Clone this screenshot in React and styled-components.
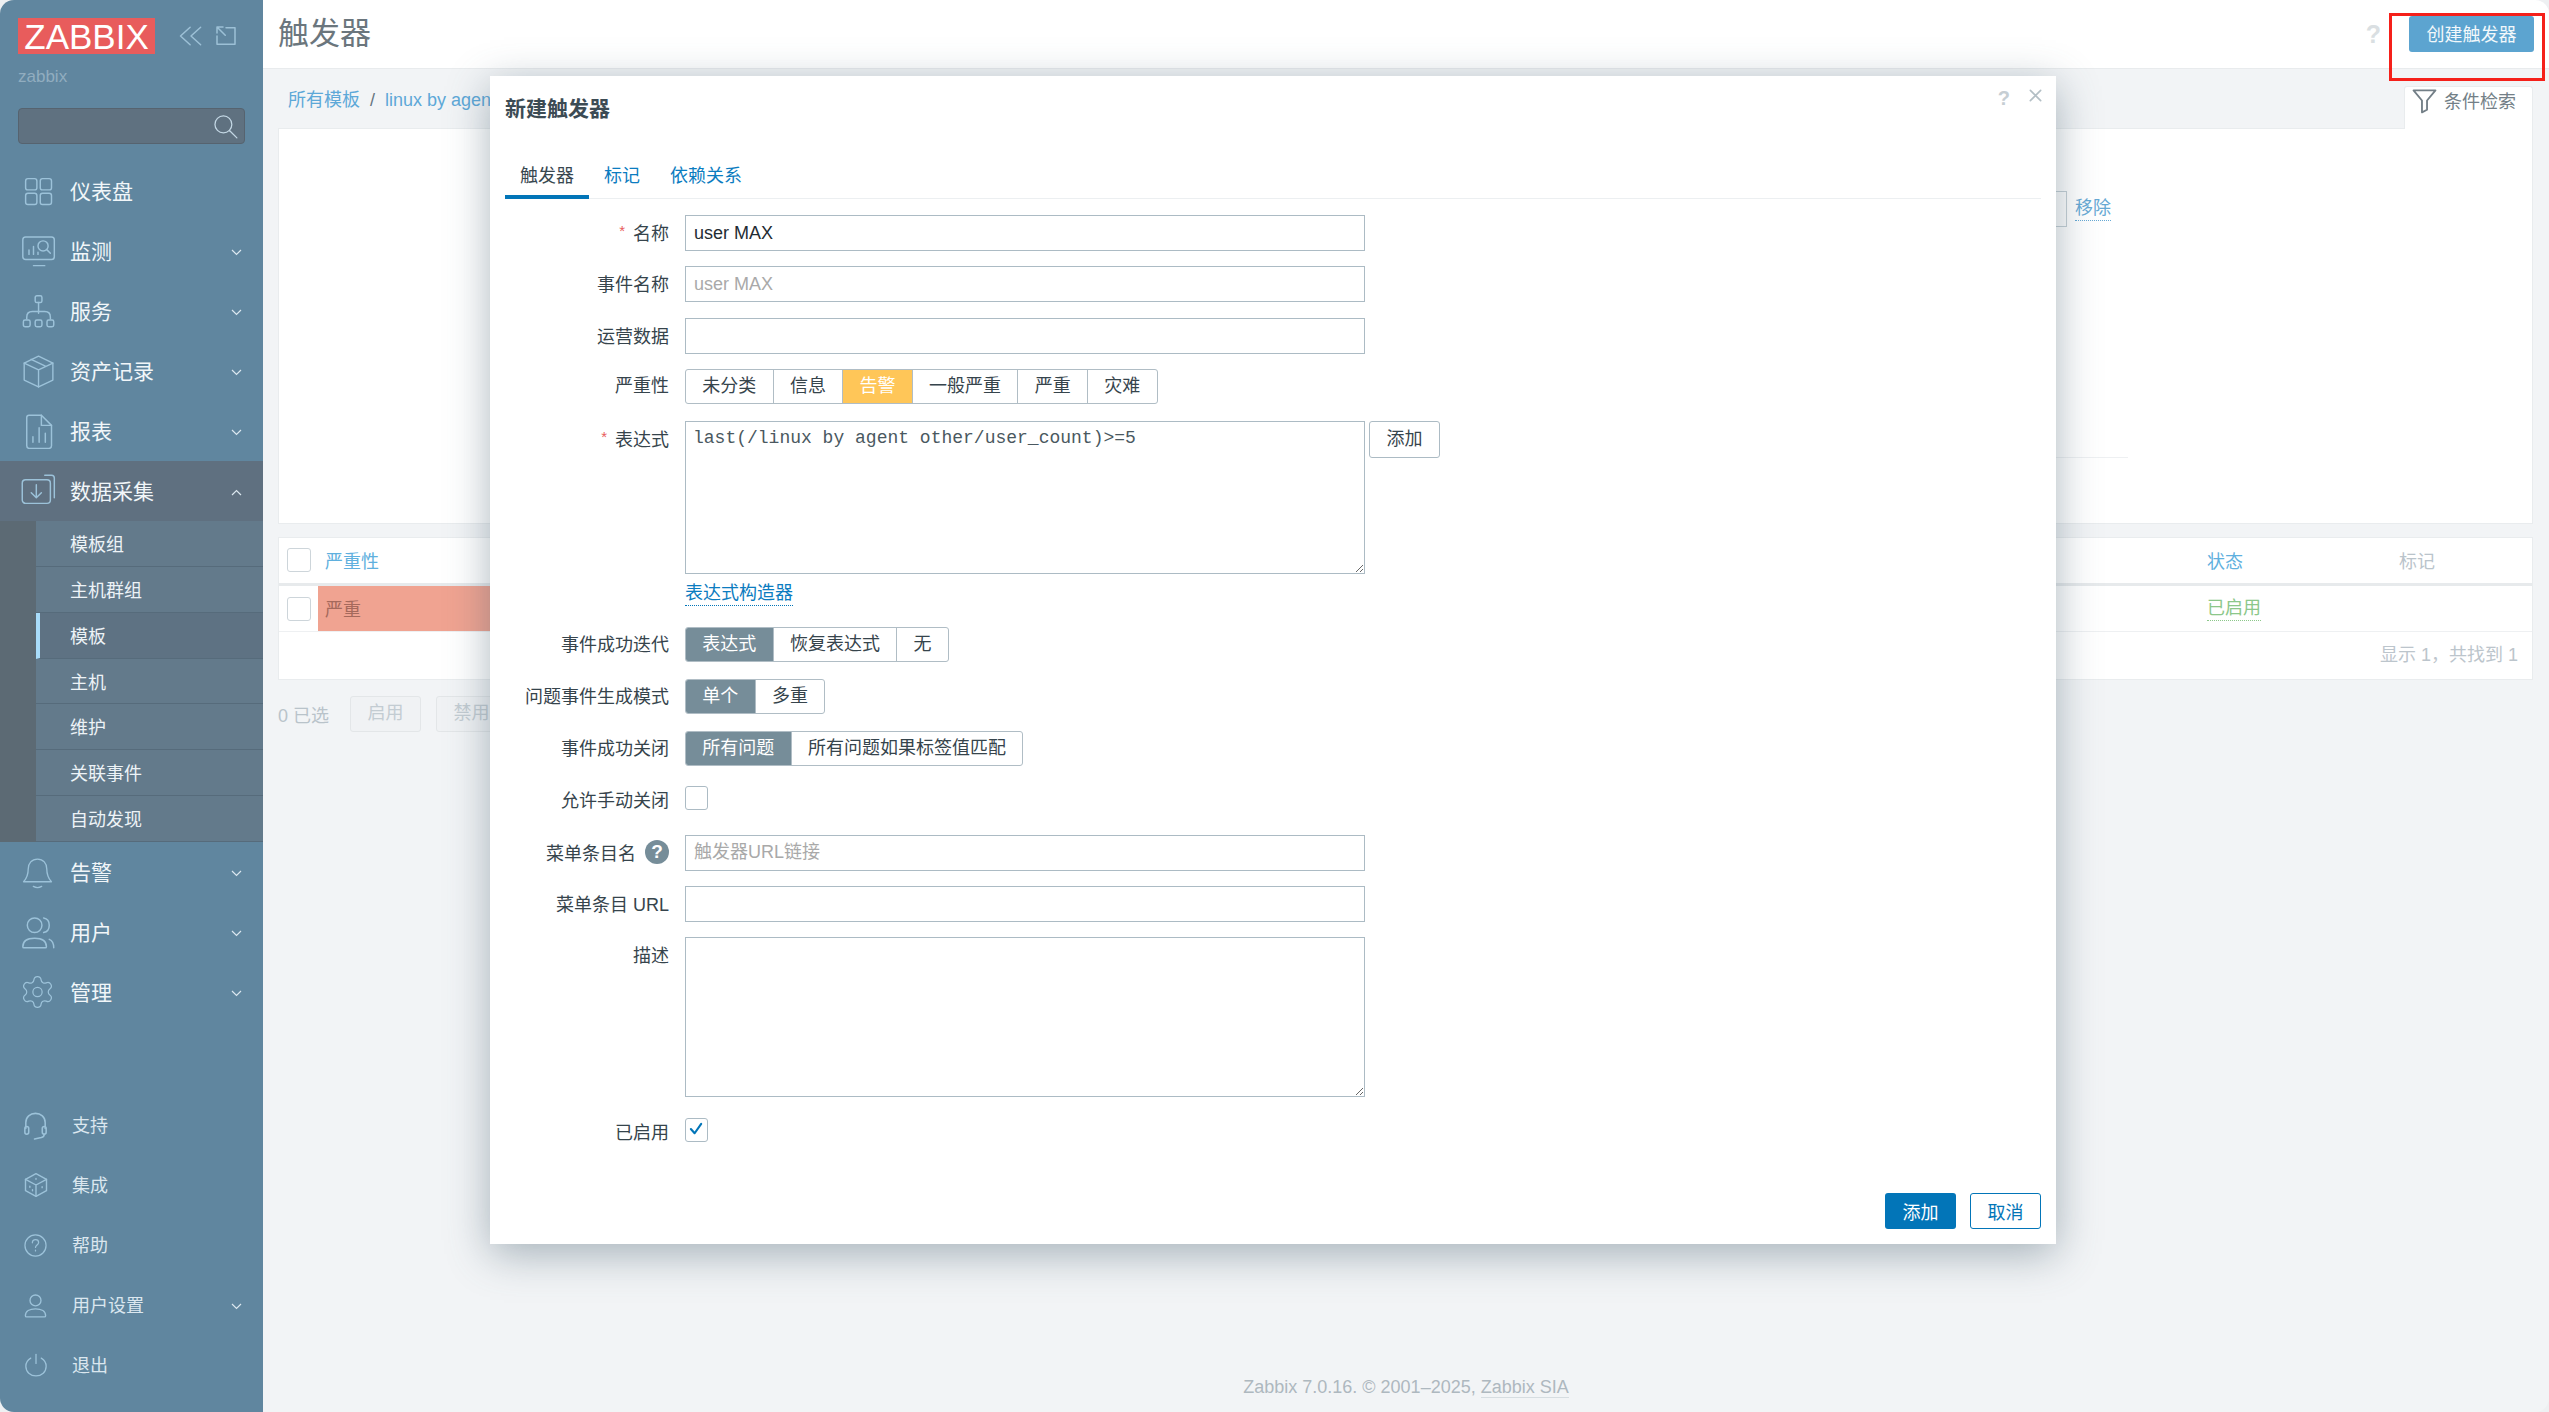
import React from 'react';
import styled, { createGlobalStyle } from 'styled-components';
import { Settings } from 'lucide-react';

const GlobalStyle = createGlobalStyle`
  html, body {
    margin: 0;
    padding: 0;
    height: 100%;
    background: #eef0f2;
  }
  body {
    font-family: "Liberation Sans", "Noto Sans CJK SC", sans-serif;
    font-size: 18px;
    color: #1f2c33;
  }
  * {
    box-sizing: border-box;
  }
`;

const iconPaths = {
  dashboard: (
    <>
      <rect x="5" y="5" width="10" height="10" rx="2" />
      <rect x="18" y="5" width="10" height="10" rx="2" />
      <rect x="5" y="18" width="10" height="10" rx="2" />
      <rect x="18" y="18" width="10" height="10" rx="2" />
    </>
  ),
  monitor: (
    <>
      <path d="M5 23.5c-1.6 0-2.5-.9-2.5-2.5V6c0-1.6.9-2.5 2.5-2.5h23c1.6 0 2.5.9 2.5 2.5v15c0 1.6-.9 2.5-2.5 2.5z" />
      <path d="M12 29h10M8 19v-4M12 19v-7M16 19v-2" />
      <circle cx="20.5" cy="11.5" r="4.5" />
      <path d="M24 15l3 3" />
    </>
  ),
  service: (
    <>
      <rect x="13.5" y="2.5" width="6" height="6" rx="1.5" />
      <path d="M16.5 8.5V18M6 23v-1.5C6 18 8 16.5 11 16.5h11c3 0 5 1.5 5 5V23" />
      <rect x="3" y="24" width="6" height="6" rx="1.5" />
      <rect x="13.5" y="24" width="6" height="6" rx="1.5" />
      <rect x="24" y="24" width="6" height="6" rx="1.5" />
    </>
  ),
  box: (
    <>
      <path d="M16.5 2L30 8.5v16L16.5 31 3 24.5v-16z" />
      <path d="M3 8.5l13.5 6.5L30 8.5M16.5 15v16M9.5 5L23 11.5" />
    </>
  ),
  report: (
    <>
      <path d="M8 2h11l9 9v18c0 1.5-1 2.5-2.5 2.5h-17C7 31.5 6 30.5 6 29V4c0-1.2.8-2 2-2z" />
      <path d="M19 2v9h9M11.5 26v-5M17 26V13M22.5 26v-8" />
    </>
  ),
  collect: (
    <>
      <rect x="2" y="6" width="25" height="21" rx="3" />
      <path d="M14.5 10.5v11M10 17.5l4.5 4.5 4.5-4.5M22 2h6c1.5 0 2.5 1 2.5 2.5V22" />
    </>
  ),
  bell: (
    <>
      <path d="M16 3c-5.5 0-9 4-9 9.5 0 6-1.5 9-4.5 12.5h27C26.5 21.5 25 18.5 25 12.5 25 7 21.5 3 16 3z" />
      <path d="M12 29.5c2.5 1.5 5.5 1.5 8 0" />
    </>
  ),
  users: (
    <>
      <circle cx="13" cy="10" r="6.5" />
      <path d="M2.5 29c0-5 4-7.5 10.5-7.5S23.5 24 23.5 29c0 .6-.4 1-1 1h-19c-.6 0-1-.4-1-1z" />
      <path d="M21 3.5c3 .5 5 3 5 6.5s-2 6-5 6.5M26 22.5c2.5 1 4 3.5 4 7.5" />
    </>
  ),
  headset: (
    <>
      <path d="M6 19v-6C6 7 10.5 3.5 16 3.5S26 7 26 13v6" />
      <rect x="5" y="17" width="4" height="8" rx="2" />
      <rect x="23" y="17" width="4" height="8" rx="2" />
      <path d="M25 25c0 2-1 3-3 3.5L15 30" />
    </>
  ),
  dice: (
    <>
      <path d="M16 3l12 6.5v13L16 29 4 22.5v-13z" />
      <path d="M4 9.5l12 6.5 12-6.5M16 16v13" />
      <path d="M16 8.5v1M9 17.5v1M12 21.5v1M23 18v1" />
    </>
  ),
  help: (
    <>
      <circle cx="16" cy="16" r="13.5" />
      <path d="M12 12.5c0-2.5 1.8-4 4-4s4 1.5 4 3.5c0 3-4 3.5-4 6.5M16 22v1" />
    </>
  ),
  user: (
    <>
      <circle cx="16" cy="10" r="6.5" />
      <path d="M4 28c0-5 5-8 12-8s12 3 12 8c0 1-.6 1.5-1.5 1.5h-21C4.6 29.5 4 29 4 28z" />
    </>
  ),
  power: (
    <>
      <path d="M16 3v11" />
      <path d="M9.5 7.5C5.8 9.8 3.5 13.5 3.5 17.5c0 7 5.5 12 12.5 12s12.5-5 12.5-12c0-4-2.3-7.7-6-10" />
    </>
  ),
  search: (
    <>
      <circle cx="13.5" cy="13.5" r="10" />
      <path d="M21 21l8.5 8.5" />
    </>
  ),
  collapse: <path d="M15 6L4 16l11 10M27 6L16 16l11 10" />,
  expand: <path d="M4 16v11h24V5H16M4 4h8M4 4v8M4 4l11 11" />,
  filter: <path d="M3 4h26L19 16v11l-6 3V16z" />,
  close: <path d="M5 5l22 22M27 5L5 27" />,
  check: <path d="M4 15l8 9L26 4" />,
};

function Icon({ name, size = 32, width = 1.3 }) {
  return (
    <svg
      width={size}
      height={size}
      viewBox="0 0 32 32"
      fill="none"
      stroke="currentColor"
      strokeWidth={width}
      strokeLinecap="round"
      strokeLinejoin="round"
    >
      {iconPaths[name]}
    </svg>
  );
}

const mainMenu = [
  { label: '仪表盘', icon: 'dashboard', size: 36 },
  { label: '监测', icon: 'monitor', size: 36, arrow: true },
  { label: '服务', icon: 'service', size: 36, arrow: true },
  { label: '资产记录', icon: 'box', size: 34, arrow: true },
  { label: '报表', icon: 'report', size: 36, arrow: true },
];

const subMenu = ['模板组', '主机群组', '模板', '主机', '维护', '关联事件', '自动发现'];

const lowerMenu = [
  { label: '告警', icon: 'bell', size: 33, arrow: true },
  { label: '用户', icon: 'users', size: 36, arrow: true },
  { label: '管理', icon: 'gear', arrow: true },
];

const bottomMenu = [
  { label: '支持', icon: 'headset', size: 31 },
  { label: '集成', icon: 'dice', size: 28 },
  { label: '帮助', icon: 'help', size: 25 },
  { label: '用户设置', icon: 'user', size: 27, arrow: true },
  { label: '退出', icon: 'power', size: 26 },
];

function Chevron({ up }) {
  return (
    <ChevronBox>
      <svg width="11" height="7" viewBox="0 0 11 7" fill="none" stroke="currentColor" strokeWidth="1.2">
        <path d={up ? 'M1 6l4.5-4.5L10 6' : 'M1 1l4.5 4.5L10 1'} />
      </svg>
    </ChevronBox>
  );
}

function MenuItem({ item, active, up, small }) {
  return (
    <MenuRow $active={active}>
      <MenuIcon $small={small}>
        {item.icon === 'gear' ? (
          <Settings size={38} strokeWidth={0.8} />
        ) : (
          <Icon name={item.icon} size={item.size || 36} width={small ? 1.6 : 1.3} />
        )}
      </MenuIcon>
      <MenuLabel $small={small}>{item.label}</MenuLabel>
      {item.arrow && <Chevron up={up} />}
    </MenuRow>
  );
}

function Segments({ items, active, warn }) {
  return (
    <SegmentGroup>
      {items.map((label, i) => (
        <Segment key={label} $active={i === active} $warn={warn}>
          {label}
        </Segment>
      ))}
    </SegmentGroup>
  );
}

function Field({ label, required, hint, children, center, top = 0, bottom = 0 }) {
  return (
    <FormRow $center={center} $top={top} $bottom={bottom}>
      <FieldLabel $required={required} $center={center}>
        {label}
        {hint && <HintMark>?</HintMark>}
      </FieldLabel>
      <FieldBody>{children}</FieldBody>
    </FormRow>
  );
}

export default function App() {
  return (
    <>
      <GlobalStyle />
      <Page>
        <Sidebar>
          <LogoRow>
            <Logo>ZABBIX</Logo>
            <LogoTools>
              <Icon name="collapse" size={28} width={1.7} />
              <Icon name="expand" size={24} width={2} />
            </LogoTools>
          </LogoRow>
          <ServerName>zabbix</ServerName>
          <SearchBox>
            <Icon name="search" size={27} width={1.5} />
          </SearchBox>
          <Nav>
            {mainMenu.map(item => (
              <MenuItem key={item.label} item={item} />
            ))}
            <MenuItem item={{ label: '数据采集', icon: 'collect', size: 36, arrow: true }} active up />
            <SubNav>
              {subMenu.map(label => (
                <SubItem key={label} $active={label === '模板'}>
                  {label}
                </SubItem>
              ))}
            </SubNav>
            {lowerMenu.map(item => (
              <MenuItem key={item.label} item={item} />
            ))}
          </Nav>
          <BottomNav>
            {bottomMenu.map(item => (
              <MenuItem key={item.label} item={item} small />
            ))}
          </BottomNav>
        </Sidebar>

        <Main>
          <Header>
            <Title>触发器</Title>
            <HeaderActions>
              <PageHelp>?</PageHelp>
              <CreateButton>创建触发器</CreateButton>
            </HeaderActions>
          </Header>
          <Crumbs>
            <CrumbList>
              <span>所有模板</span>
              <CrumbSep>/</CrumbSep>
              <span>linux by agent other</span>
            </CrumbList>
            <FilterTab>
              <Icon name="filter" size={27} width={2.2} />
              条件检索
            </FilterTab>
          </Crumbs>
          <FilterPanel>
            <FilterRow>
              <FilterStub />
              <RemoveLink>移除</RemoveLink>
            </FilterRow>
            <FilterRule />
          </FilterPanel>
          <TablePanel>
            <TableHead>
              <CheckCell>
                <FadedCheck />
              </CheckCell>
              <HeadLink>严重性</HeadLink>
              <span />
              <HeadLink>状态</HeadLink>
              <HeadMuted>标记</HeadMuted>
            </TableHead>
            <TableRow>
              <CheckCell>
                <FadedCheck />
              </CheckCell>
              <SeverityCell>严重</SeverityCell>
              <span />
              <StatusCell>
                <StatusLink>已启用</StatusLink>
              </StatusCell>
              <span />
            </TableRow>
            <Pager>显示 1，共找到 1</Pager>
          </TablePanel>
          <ActionRow>
            <SelectedCount>0 已选</SelectedCount>
            <DisabledButton>启用</DisabledButton>
            <DisabledButton>禁用</DisabledButton>
          </ActionRow>
          <Footer>
            Zabbix 7.0.16. © 2001–2025, <FooterLink>Zabbix SIA</FooterLink>
          </Footer>
        </Main>

        <Marker />

        <Modal>
          <ModalHeader>
            <ModalTitle>新建触发器</ModalTitle>
            <ModalTools>
              <ModalHelp>?</ModalHelp>
              <Icon name="close" size={15} width={3.5} />
            </ModalTools>
          </ModalHeader>
          <Tabs>
            <Tab $active>触发器</Tab>
            <Tab>标记</Tab>
            <Tab>依赖关系</Tab>
          </Tabs>
          <Form>
            <Field label="名称" required>
              <TextInput defaultValue="user MAX" />
            </Field>
            <Field label="事件名称">
              <TextInput placeholder="user MAX" />
            </Field>
            <Field label="运营数据">
              <TextInput />
            </Field>
            <Field label="严重性" center>
              <Segments items={['未分类', '信息', '告警', '一般严重', '严重', '灾难']} active={2} warn />
            </Field>
            <Field label="表达式" required>
              <ExpressionRow>
                <div>
                  <TextArea
                    $mono
                    $height={153}
                    defaultValue="last(/linux by agent other/user_count)>=5"
                  />
                  <BuilderLink>表达式构造器</BuilderLink>
                </div>
                <AddSmall>添加</AddSmall>
              </ExpressionRow>
            </Field>
            <Field label="事件成功迭代" center>
              <Segments items={['表达式', '恢复表达式', '无']} active={0} />
            </Field>
            <Field label="问题事件生成模式" center>
              <Segments items={['单个', '多重']} active={0} />
            </Field>
            <Field label="事件成功关闭" center>
              <Segments items={['所有问题', '所有问题如果标签值匹配']} active={0} />
            </Field>
            <Field label="允许手动关闭" center top={3} bottom={1}>
              <CheckBox />
            </Field>
            <Field label="菜单条目名" hint>
              <TextInput placeholder="触发器URL链接" />
            </Field>
            <Field label="菜单条目 URL">
              <TextInput />
            </Field>
            <Field label="描述">
              <TextArea $height={160} />
            </Field>
            <Field label="已启用" center top={5}>
              <CheckBox>
                <Icon name="check" size={15} width={4.5} />
              </CheckBox>
            </Field>
          </Form>
          <ModalFooter>
            <PrimaryButton>添加</PrimaryButton>
            <OutlineButton>取消</OutlineButton>
          </ModalFooter>
        </Modal>
      </Page>
    </>
  );
}

const Page = styled.div`
  position: relative;
  display: flex;
  width: 2549px;
  height: 1412px;
  overflow: hidden;
  border-radius: 14px;
  background: #f2f4f6;
`;

const Sidebar = styled.aside`
  display: flex;
  flex-direction: column;
  flex: 0 0 263px;
  background: #60869f;
  color: #f1f6f9;
`;

const LogoRow = styled.div`
  display: flex;
  align-items: center;
  padding: 18px 0 0 18px;
`;

const Logo = styled.div`
  width: 137px;
  height: 36px;
  background: #e85c5c;
  color: #ffffff;
  font-size: 35px;
  line-height: 37px;
  text-align: center;
`;

const LogoTools = styled.div`
  display: flex;
  align-items: center;
  gap: 9px;
  margin-left: 22px;
  color: #9cc0d6;
`;

const ServerName = styled.div`
  padding: 12px 0 0 18px;
  height: 54px;
  color: #91adbf;
  font-size: 17px;
  line-height: 22px;
`;

const SearchBox = styled.div`
  display: flex;
  align-items: center;
  justify-content: flex-end;
  width: 227px;
  height: 36px;
  margin-left: 18px;
  padding-right: 5px;
  background: #5f7180;
  border: 1px solid #56636f;
  border-radius: 4px;
  color: #c3d7e4;
`;

const Nav = styled.nav`
  margin-top: 17px;
`;

const BottomNav = styled.nav`
  margin-top: auto;
  padding-bottom: 17px;
`;

const MenuRow = styled.div`
  display: flex;
  align-items: center;
  height: 60px;
  background: ${props => (props.$active ? '#5f7080' : 'transparent')};
`;

const MenuIcon = styled.span`
  display: flex;
  align-items: center;
  justify-content: center;
  width: 37px;
  margin-left: ${props => (props.$small ? '17px' : '19px')};
  margin-right: ${props => (props.$small ? '18px' : '14px')};
  color: #9cc2d9;
`;

const MenuLabel = styled.span`
  flex: 1;
  padding-bottom: 2px;
  font-size: ${props => (props.$small ? '18px' : '21px')};
  color: ${props => (props.$small ? '#dbe7ef' : '#f1f6f9')};
`;

const ChevronBox = styled.span`
  display: flex;
  width: 11px;
  margin: 2px 21px 0 0;
  color: #dbe7ef;
`;

const SubNav = styled.div`
  margin: 0;
  padding-left: 36px;
  background: #5c6a74;
`;

const SubItem = styled.div`
  height: 45.86px;
  padding-left: ${props => (props.$active ? '30px' : '34px')};
  line-height: 48px;
  font-size: 18px;
  color: #edf3f7;
  background: ${props => (props.$active ? '#5e7283' : '#637a8b')};
  border-left: ${props => (props.$active ? '4px solid #a8dcfa' : 'none')};
  border-bottom: 1px solid #566b7b;
`;

const Main = styled.main`
  display: flex;
  flex-direction: column;
  flex: 1;
  min-width: 0;
`;

const Header = styled.header`
  display: flex;
  justify-content: space-between;
  height: 69px;
  padding: 16px 15px 0 15px;
  background: #ffffff;
  border-bottom: 1px solid #e8ebed;
`;

const Title = styled.h1`
  margin: 0;
  font-size: 31px;
  line-height: 36px;
  font-weight: 400;
  color: #6b767d;
`;

const HeaderActions = styled.div`
  display: flex;
  align-items: flex-start;
  gap: 28px;
`;

const PageHelp = styled.span`
  font-size: 25px;
  line-height: 36px;
  font-weight: 700;
  color: #dadfe2;
`;

const CreateButton = styled.button`
  width: 125px;
  height: 36px;
  padding: 0 0 3px;
  background: #5ca4d0;
  border: 0;
  border-radius: 3px;
  color: #f2f8fb;
  font: inherit;
`;

const Crumbs = styled.div`
  display: flex;
  justify-content: space-between;
  align-items: flex-end;
  height: 59px;
  padding: 0 16px 0 15px;
`;

const CrumbList = styled.div`
  display: flex;
  align-self: center;
  align-items: baseline;
  gap: 10px;
  width: 212px;
  overflow: hidden;
  padding: 3px 0 0 10px;
  line-height: 26px;
  white-space: nowrap;
  color: #5da8d8;
`;

const CrumbSep = styled.span`
  color: #66757f;
`;

const FilterTab = styled.div`
  position: relative;
  z-index: 1;
  display: flex;
  align-items: center;
  gap: 6px;
  width: 129px;
  height: 43px;
  margin-bottom: -1px;
  padding: 0 0 16px 6px;
  background: #ffffff;
  border: 1px solid #e9ecee;
  border-bottom: 0;
  border-radius: 3px 3px 0 0;
  color: #737f87;
`;

const FilterPanel = styled.section`
  height: 396px;
  margin: 0 16px 0 15px;
  padding: 62px 0 0 1620px;
  background: #ffffff;
  border: 1px solid #e9ecee;
`;

const FilterRow = styled.div`
  display: flex;
  align-items: flex-start;
`;

const FilterStub = styled.div`
  width: 168px;
  height: 36px;
  border: 1px solid #c5d0d6;
`;

const RemoveLink = styled.span`
  margin: 5px 0 0 8px;
  color: #67a9d4;
  border-bottom: 1px dotted #67a9d4;
  line-height: 24px;
`;

const FilterRule = styled.div`
  width: 229px;
  height: 1px;
  margin-top: 230px;
  background: #eef0f2;
`;

const TablePanel = styled.section`
  margin: 13px 16px 0 15px;
  background: #ffffff;
  border: 1px solid #e9ecee;
`;

const TableHead = styled.div`
  display: grid;
  grid-template-columns: 39px 300px 1fr 199px 133px;
  align-items: center;
  height: 48px;
  padding-bottom: 2px;
  border-bottom: 3px solid #e7eaec;
`;

const TableRow = styled(TableHead)`
  height: 46px;
  padding-bottom: 0;
  border-bottom: 1px solid #eef0f2;
  align-items: stretch;
`;

const CheckCell = styled.div`
  display: flex;
  align-items: center;
  padding-left: 8px;
`;

const FadedCheck = styled.span`
  display: block;
  width: 24px;
  height: 24px;
  background: #ffffff;
  border: 1px solid #cdd5da;
  border-radius: 3px;
`;

const HeadLink = styled.span`
  padding-left: 7px;
  color: #5fb0de;
`;

const HeadMuted = styled.span`
  color: #bac4cb;
`;

const SeverityCell = styled.div`
  display: flex;
  align-items: center;
  padding: 0 0 2px 7px;
  background: #f0a391;
  color: #a5695c;
`;

const StatusCell = styled.div`
  display: flex;
  align-items: center;
  padding-left: 7px;
`;

const StatusLink = styled.span`
  color: #8cc78a;
  border-bottom: 1px dotted #8cc78a;
  line-height: 24px;
`;

const Pager = styled.div`
  height: 47px;
  padding-right: 14px;
  line-height: 46px;
  text-align: right;
  color: #bcc5cc;
`;

const ActionRow = styled.div`
  display: flex;
  align-items: center;
  gap: 15px;
  padding: 16px 0 0 15px;
`;

const SelectedCount = styled.span`
  width: 57px;
  color: #b9c3ca;
`;

const DisabledButton = styled.span`
  width: 71px;
  height: 36px;
  line-height: 33px;
  text-align: center;
  background: #f0f2f4;
  border: 1px solid #e3e6e8;
  border-radius: 3px;
  color: #c3ccd2;
`;

const Footer = styled.footer`
  margin-top: auto;
  padding: 0 0 13px;
  text-align: center;
  line-height: 24px;
  color: #aeb8bf;
`;

const FooterLink = styled.span`
  border-bottom: 1px solid #d6dde1;
`;

const Marker = styled.div`
  position: absolute;
  left: 2389px;
  top: 13px;
  width: 156px;
  height: 68px;
  border: 3px solid #f5201a;
  pointer-events: none;
`;

const Modal = styled.div`
  position: absolute;
  left: 490px;
  top: 76px;
  display: flex;
  flex-direction: column;
  width: 1566px;
  height: 1168px;
  padding: 0 15px;
  background: #ffffff;
  box-shadow: 0 10px 40px rgba(70, 95, 110, 0.45);
`;

const ModalHeader = styled.div`
  display: flex;
  justify-content: space-between;
  height: 64px;
  padding-top: 17px;
`;

const ModalTitle = styled.h2`
  margin: 0;
  font-size: 21px;
  line-height: 31px;
  font-weight: 700;
  color: #3c4b54;
`;

const ModalTools = styled.div`
  display: flex;
  align-items: flex-start;
  gap: 18px;
  margin: -5px -2px 0 0;
  color: #b3bfc5;
`;

const ModalHelp = styled.span`
  font-size: 20px;
  line-height: 20px;
  font-weight: 700;
  color: #c6ced3;
`;

const Tabs = styled.div`
  display: flex;
  height: 59px;
  padding-top: 21px;
  border-bottom: 1px solid #eceff1;
`;

const Tab = styled.div`
  height: 38px;
  padding: 0 15px;
  line-height: 30px;
  color: ${props => (props.$active ? '#38474f' : '#0b7cc0')};
  border-bottom: ${props => (props.$active ? '4px solid #0275b8' : '0')};
`;

const Form = styled.div`
  display: flex;
  flex-direction: column;
  gap: 15.33px;
  padding-top: 16px;
`;

const FormRow = styled.div`
  display: grid;
  grid-template-columns: 164px 1fr;
  column-gap: 16px;
  min-height: ${props => (props.$center && !props.$top ? '36.7px' : '0')};
  padding: ${props => props.$top}px 0 ${props => props.$bottom}px;
`;

const FieldLabel = styled.div`
  display: flex;
  align-items: center;
  justify-content: flex-end;
  height: ${props => (props.$center ? 'auto' : '36px')};
  padding-bottom: ${props => (props.$center ? '6px' : '2px')};
  color: #36444c;

  &::before {
    content: ${props => (props.$required ? '"*"' : 'none')};
    margin: -3px 8px 0 0;
    color: #e85c5c;
    font-size: 15px;
  }
`;

const HintMark = styled.span`
  width: 24px;
  height: 24px;
  margin-left: 9px;
  border-radius: 50%;
  background: #768d99;
  color: #ffffff;
  font-size: 19px;
  font-weight: 700;
  line-height: 24px;
  text-align: center;
`;

const FieldBody = styled.div`
  display: flex;
  align-items: flex-start;
`;

const TextInput = styled.input`
  width: 680px;
  height: 36px;
  padding: 0 8px;
  background: #ffffff;
  border: 1px solid #acbbc4;
  border-radius: 0;
  color: #1f2c33;
  font: inherit;
  outline: 0;

  &::placeholder {
    color: #a9a9a9;
    opacity: 1;
  }
`;

const TextArea = styled.textarea`
  display: block;
  width: 680px;
  height: ${props => props.$height}px;
  padding: 6px 7px;
  background: #ffffff;
  border: 1px solid #acbbc4;
  border-radius: 0;
  color: #4a5860;
  font: inherit;
  font-family: ${props => (props.$mono ? '"Liberation Mono", monospace' : 'inherit')};
  outline: 0;
  resize: both;
`;

const SegmentGroup = styled.div`
  display: flex;
  height: 35px;
  background: #ffffff;
  border: 1px solid #b0bdc5;
  border-radius: 3px;
  overflow: hidden;
`;

const Segment = styled.span`
  padding: 0 16.3px;
  line-height: 33px;
  color: ${props => (props.$active ? '#ffffff' : '#36444c')};
  background: ${props => (props.$active ? (props.$warn ? '#ffc658' : '#768d99') : 'transparent')};
  border-right: 1px solid #b0bdc5;
  white-space: nowrap;

  &:last-child {
    border-right: 0;
  }
`;

const ExpressionRow = styled.div`
  display: flex;
  align-items: flex-start;
  gap: 4px;
`;

const AddSmall = styled.span`
  width: 71px;
  height: 37px;
  line-height: 34px;
  text-align: center;
  background: #ffffff;
  border: 1px solid #acbbc4;
  border-radius: 3px;
  color: #36444c;
`;

const BuilderLink = styled.span`
  display: inline-block;
  margin: 7px 0 6px;
  line-height: 24px;
  color: #0b7cc0;
  border-bottom: 1px dotted #0275b8;
`;

const CheckBox = styled.span`
  display: flex;
  align-items: center;
  justify-content: center;
  width: 23px;
  height: 24px;
  background: #ffffff;
  border: 1px solid #acbbc4;
  border-radius: 3px;
  color: #0275b8;
`;

const ModalFooter = styled.div`
  display: flex;
  justify-content: flex-end;
  gap: 14px;
  margin-top: auto;
  padding-bottom: 15px;
`;

const PrimaryButton = styled.button`
  width: 71px;
  height: 36px;
  padding: 0;
  background: #0275b8;
  border: 0;
  border-radius: 3px;
  color: #ffffff;
  font: inherit;
`;

const OutlineButton = styled.button`
  width: 71px;
  height: 36px;
  padding: 0;
  background: #ffffff;
  border: 1px solid #0275b8;
  border-radius: 3px;
  color: #0275b8;
  font: inherit;
`;
